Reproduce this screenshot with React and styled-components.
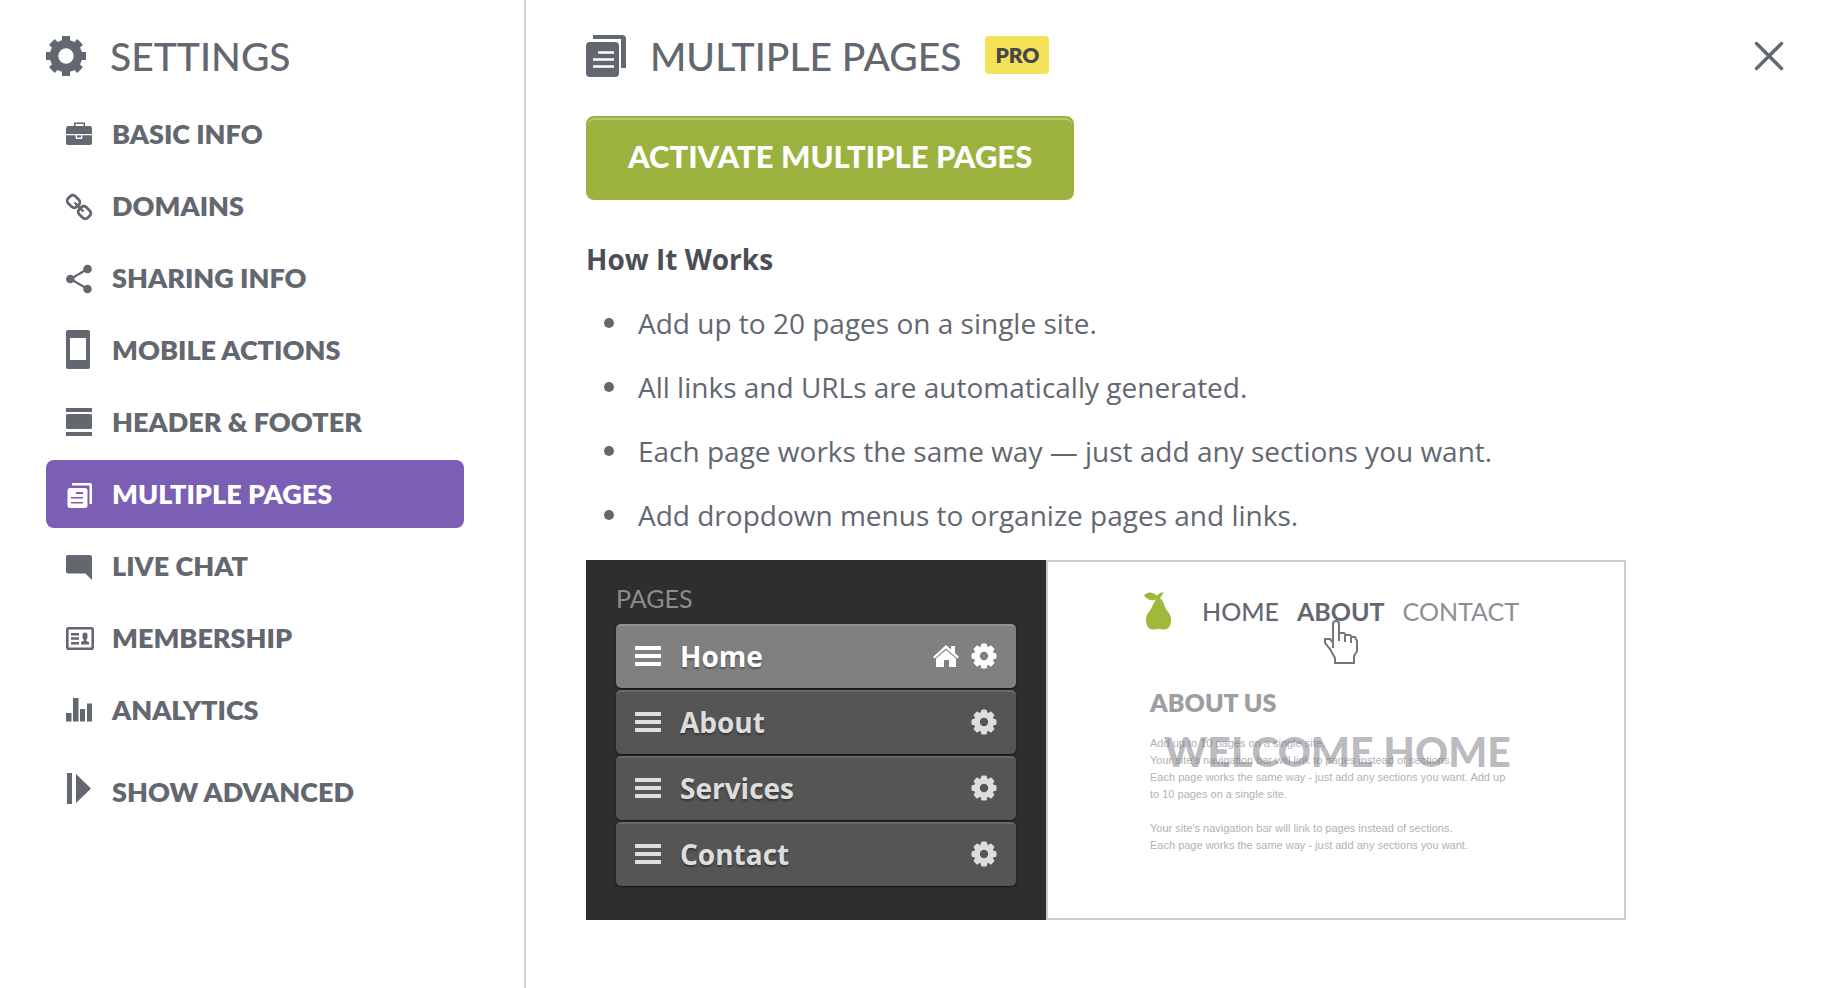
import styled, { createGlobalStyle } from 'styled-components';

const GlobalStyle = createGlobalStyle`
  * {
    box-sizing: border-box;
  }
  body {
    margin: 0;
    background: #ffffff;
    color: #636770;
    font-family: "Open Sans", "Noto Sans", sans-serif;
  }
  h1, h2, h3, h4, p, ul {
    margin: 0;
    padding: 0;
  }
`;

const Layout = styled.div`
  display: flex;
  min-height: 100vh;
`;

const Sidebar = styled.aside`
  flex: 0 0 526px;
  padding: 32px 60px 32px 46px;
  border-right: 2px solid #cdd2d6;
`;

const Main = styled.main`
  flex: 1;
  min-width: 0;
  padding: 32px 36px 32px 60px;
`;

const Header = styled.header`
  display: flex;
  align-items: center;
  height: 48px;
`;

const HeaderIcon = styled.svg`
  flex: none;
  width: 40px;
  height: 44px;
  margin-right: 24px;
`;

const Title = styled.h1`
  font-family: Lato, sans-serif;
  font-size: 39px;
  font-weight: 500;
  line-height: 48px;
`;

const Badge = styled.span`
  margin: 0 0 2px 24px;
  padding: 0 10px;
  border-radius: 4px;
  background: #f4e157;
  color: #45474b;
  font-family: Lato, sans-serif;
  font-size: 21px;
  font-weight: 800;
  line-height: 38px;
`;

const CloseButton = styled.button`
  display: flex;
  margin-left: auto;
  padding: 0;
  border: none;
  background: none;
  color: #636770;
  cursor: pointer;
`;

const NavList = styled.ul`
  display: flex;
  flex-direction: column;
  gap: 4px;
  margin-top: 20px;
  list-style: none;

  li:last-child {
    margin-top: 10px;
  }
`;

const NavLink = styled.a`
  display: flex;
  align-items: center;
  gap: 18px;
  height: 68px;
  padding: 0 20px;
  border-radius: 8px;
  background: ${({ $active }) => ($active ? '#7a5fb4' : 'transparent')};
  color: ${({ $active }) => ($active ? '#ffffff' : '#636770')};
  font-family: Lato, sans-serif;
  font-size: 27px;
  font-weight: 800;
  text-decoration: none;

  svg {
    flex: none;
    width: 28px;
    height: 40px;
  }
`;

const NavLabel = styled.span`
  padding-bottom: 2px;
`;

const ActivateButton = styled.button`
  display: block;
  height: 84px;
  margin-top: 36px;
  padding: 0 40px 4px;
  border: 2px solid #9cb23f;
  border-radius: 8px;
  background: #9cb23f;
  box-shadow: inset 0 2px 0 rgba(255, 255, 255, 0.3);
  color: #ffffff;
  font-family: Lato, sans-serif;
  font-size: 31px;
  font-weight: 900;
  cursor: pointer;
`;

const SectionTitle = styled.h2`
  margin-top: 39px;
  color: #4b4e56;
  font-size: 28px;
  font-weight: 700;
  line-height: 40px;
`;

const FeatureList = styled.ul`
  display: flex;
  flex-direction: column;
  gap: 24px;
  margin-top: 24px;
  list-style: none;
`;

const Feature = styled.li`
  display: flex;
  align-items: center;
  font-size: 28px;
  line-height: 40px;

  &::before {
    content: '';
    width: 10px;
    height: 10px;
    margin: 0 24px 0 18px;
    border-radius: 50%;
    background: #636770;
  }
`;

const Preview = styled.div`
  display: flex;
  width: 100%;
  max-width: 1040px;
  margin-top: 25px;
`;

const PagesPanel = styled.div`
  flex: 0 0 460px;
  padding: 22px 30px 34px;
  background: #2e2e2e;
`;

const PagesLabel = styled.h3`
  color: #8c8c8c;
  font-family: Lato, sans-serif;
  font-size: 25px;
  font-weight: 400;
  line-height: 32px;
`;

const PageRows = styled.ul`
  display: flex;
  flex-direction: column;
  gap: 2px;
  margin-top: 10px;
  list-style: none;
`;

const PageRow = styled.li`
  display: flex;
  align-items: center;
  height: 64px;
  padding: 0 18px 3px;
  border-top: 2px solid ${({ $current }) => ($current ? '#929292' : '#696969')};
  border-radius: 5px;
  background: ${({ $current }) => ($current ? '#808080' : '#555555')};
  box-shadow: 0 1px 2px rgba(0, 0, 0, 0.6);
  color: ${({ $current }) => ($current ? '#ffffff' : '#dddddd')};
  font-size: 28px;
  font-weight: 700;
  text-shadow: 0 2px 2px rgba(0, 0, 0, 0.35);

  svg {
    flex: none;
    width: 28px;
    height: 28px;
  }
`;

const PageName = styled.span`
  flex: 1;
  margin-left: 18px;
`;

const RowIcons = styled.span`
  display: flex;
  gap: 10px;
`;

const SitePanel = styled.div`
  flex: 1;
  min-width: 0;
  padding: 28px 20px 28px 96px;
  border: 2px solid #cccccc;
`;

const SiteNav = styled.nav`
  display: flex;
  align-items: center;
  height: 42px;

  svg {
    flex: none;
    margin-right: 30px;
  }
`;

const SiteLink = styled.a`
  position: relative;
  margin-right: 18px;
  color: ${({ $light }) => ($light ? '#8b8f95' : '#636770')};
  font-family: Lato, sans-serif;
  font-size: 25px;
  font-weight: ${({ $weight }) => $weight};
  text-decoration: none;
`;

const Cursor = styled.svg`
  position: absolute;
  top: 24px;
  left: 27px;
`;

const SiteArticle = styled.article`
  margin-top: 54px;
  padding-left: 6px;
`;

const SiteHeading = styled.h3`
  color: #9b9ea2;
  font-family: Lato, sans-serif;
  font-size: 25px;
  font-weight: 800;
  line-height: 32px;
`;

const SiteBody = styled.div`
  position: relative;
  margin-top: 17px;
  color: #b0b2b5;
  font-family: "Liberation Sans", sans-serif;
  font-size: 11px;
  line-height: 17px;

  p + p {
    margin-top: 17px;
  }
`;

const Welcome = styled.div`
  position: absolute;
  top: 0;
  left: 14px;
  color: rgba(99, 103, 112, 0.45);
  font-family: Lato, sans-serif;
  font-size: 41px;
  font-weight: 900;
  line-height: 34px;
  white-space: nowrap;
`;

const toothAngles = [0, 45, 90, 135];

function GearIcon() {
  return (
    <HeaderIcon viewBox="0 0 40 44" fill="currentColor" aria-hidden="true">
      <circle cx="20" cy="22" r="12" fill="none" stroke="currentColor" strokeWidth="8.600" />
      {toothAngles.map((angle) => (
        <g key={angle} transform={`rotate(${angle} 20 22)`}>
          <path d="M16 2h8v6h-8zM16 36h8v6h-8z" />
        </g>
      ))}
    </HeaderIcon>
  );
}

function PagesHeaderIcon() {
  return (
    <HeaderIcon viewBox="0 0 40 44" fill="currentColor" aria-hidden="true">
      <path d="M7 1h29a4 4 0 0 1 4 4v29h-5V5H7z" />
      <rect y="8" width="33" height="35" rx="4" />
      <path d="M12 18.500h16M7 25.500h21M7 32.500h21" stroke="#fff" strokeWidth="2.500" />
    </HeaderIcon>
  );
}

function SmallGear() {
  return (
    <svg viewBox="0 0 28 28" fill="currentColor" aria-hidden="true">
      <circle cx="14" cy="14" r="7.200" fill="none" stroke="currentColor" strokeWidth="6" />
      {toothAngles.map((angle) => (
        <g key={angle} transform={`rotate(${angle} 14 14)`}>
          <rect x="11" y="1.500" width="6" height="5" rx="1.500" />
          <rect x="11" y="21.500" width="6" height="5" rx="1.500" />
        </g>
      ))}
    </svg>
  );
}

function MenuBars() {
  return (
    <svg viewBox="0 0 28 28" fill="currentColor" aria-hidden="true">
      <path d="M1 4h26v4H1zM1 12h26v4H1zM1 20h26v4H1z" />
    </svg>
  );
}

function HouseIcon() {
  return (
    <svg viewBox="0 0 28 28" fill="currentColor" aria-hidden="true">
      <path d="M1 15 14 3l5 4.500V4h4v7l4 4-1.500 1.500L14 6.500 2.500 16.500z" />
      <path d="M4 16.500 14 8l10 8.500V25h-7v-7h-5v7H4z" />
    </svg>
  );
}

// 28x40 drawings, one for each entry of the sidebar
const navIcons = {
  info: (
    <>
      <path d="M8.700 13V9.300h9.600V13" fill="none" stroke="currentColor" strokeWidth="1.500" />
      <path d="M2.500 12h21a2.500 2.500 0 0 1 2.500 2.500V20H0v-5.500A2.500 2.500 0 0 1 2.500 12z" />
      <path d="M0 21.300h9.700V25h6.600v-3.700H26V29a2 2 0 0 1-2 2H2a2 2 0 0 1-2-2z" />
      <path d="M11 21.300h4v2.200h-4z" />
    </>
  ),
  domains: (
    <g fill="none" stroke="currentColor" strokeWidth="2.800">
      <rect x="1.500" y="10.500" width="12" height="10" rx="3.500" transform="rotate(45 7.500 15.500)" />
      <rect x="12.500" y="21.500" width="12" height="10" rx="3.500" transform="rotate(45 18.500 26.500)" />
      <path d="m8.500 16.500 9 9" strokeWidth="2.400" />
    </g>
  ),
  sharing: (
    <>
      <path d="M21.500 11 4.500 21l17 10" fill="none" stroke="currentColor" strokeWidth="2.200" />
      <circle cx="21.500" cy="11" r="4.300" />
      <circle cx="4.300" cy="21" r="4.300" />
      <circle cx="21.500" cy="31" r="4.300" />
    </>
  ),
  mobile: <path fillRule="evenodd" d="M2 0h20a2 2 0 0 1 2 2v35a2 2 0 0 1-2 2H2a2 2 0 0 1-2-2V2a2 2 0 0 1 2-2zM4 8v22h16V8z" />,
  header: <path d="M0 6h26v4H0zM1.500 12h23a1.500 1.500 0 0 1 1.500 1.500v12a1.500 1.500 0 0 1-1.500 1.500h-23A1.500 1.500 0 0 1 0 25.500v-12A1.500 1.500 0 0 1 1.500 12zM0 30h26v4H0z" />,
  pages: (
    <>
      <path d="M6 9h18a2 2 0 0 1 2 2v19h-2.500V11.500H6z" />
      <path fillRule="evenodd" d="M4 14h15a2.500 2.500 0 0 1 2.500 2.500v15A2.500 2.500 0 0 1 19 34H4a2.500 2.500 0 0 1-2.500-2.500v-15A2.500 2.500 0 0 1 4 14zm6 4v2h7v-2zM5 23v1.500h12V23zM5 28v1.500h12V28z" />
    </>
  ),
  chat: <path d="M2 9h22a2 2 0 0 1 2 2v23l-6.500-6.500H2a2 2 0 0 1-2-2V11a2 2 0 0 1 2-2z" />,
  membership: (
    <>
      <rect x="1.300" y="10.300" width="25.400" height="20.400" rx="1.500" fill="none" stroke="currentColor" strokeWidth="2.600" />
      <path d="M5 15h8v2.500H5zM5 19.300h8v2.500H5zM5 24h8v2.500H5zM15 26.500V24l3-1.200-1.500-3V17a2.500 2.500 0 0 1 5 0v2.800l-1.500 3 3 1.200v2.500z" />
    </>
  ),
  analytics: <path d="M0 23h5.500v8.500H0zM7 8h5.500v23.500H7zM14 19h5v12.500h-5zM21 13.500h5v18h-5z" />,
  advanced: <path d="M1 1h5v31H1zM10 2l15 14.500L10 31z" />,
};

const navItems = [
  { icon: 'info', label: 'BASIC INFO' },
  { icon: 'domains', label: 'DOMAINS' },
  { icon: 'sharing', label: 'SHARING INFO' },
  { icon: 'mobile', label: 'MOBILE ACTIONS' },
  { icon: 'header', label: 'HEADER & FOOTER' },
  { icon: 'pages', label: 'MULTIPLE PAGES', active: true },
  { icon: 'chat', label: 'LIVE CHAT' },
  { icon: 'membership', label: 'MEMBERSHIP' },
  { icon: 'analytics', label: 'ANALYTICS' },
  { icon: 'advanced', label: 'SHOW ADVANCED' },
];

const features = [
  'Add up to 20 pages on a single site.',
  'All links and URLs are automatically generated.',
  'Each page works the same way — just add any sections you want.',
  'Add dropdown menus to organize pages and links.',
];

const pages = ['Home', 'About', 'Services', 'Contact'];

export default function App() {
  return (
    <Layout>
      <GlobalStyle />
      <Sidebar>
        <Header>
          <GearIcon />
          <Title as="h2">SETTINGS</Title>
        </Header>
        <nav aria-label="Settings">
          <NavList>
            {navItems.map(({ icon, label, active }) => (
              <li key={icon}>
                <NavLink href={`#${icon}`} $active={active}>
                  <svg viewBox="0 0 28 40" fill="currentColor" aria-hidden="true">
                    {navIcons[icon]}
                  </svg>
                  <NavLabel>{label}</NavLabel>
                </NavLink>
              </li>
            ))}
          </NavList>
        </nav>
      </Sidebar>
      <Main>
        <Header>
          <PagesHeaderIcon />
          <Title>MULTIPLE PAGES</Title>
          <Badge>PRO</Badge>
          <CloseButton type="button" aria-label="Close">
            <svg width="34" height="34" viewBox="0 0 34 34" stroke="currentColor" strokeWidth="3.400" strokeLinecap="round" aria-hidden="true">
              <path d="m4.500 4.500 25 25M29.500 4.500l-25 25" />
            </svg>
          </CloseButton>
        </Header>
        <ActivateButton type="button">ACTIVATE MULTIPLE PAGES</ActivateButton>
        <SectionTitle>How It Works</SectionTitle>
        <FeatureList>
          {features.map((feature) => (
            <Feature key={feature}>{feature}</Feature>
          ))}
        </FeatureList>
        <Preview>
          <PagesPanel>
            <PagesLabel>PAGES</PagesLabel>
            <PageRows>
              {pages.map((page, index) => (
                <PageRow key={page} $current={index === 0}>
                  <MenuBars />
                  <PageName>{page}</PageName>
                  <RowIcons>
                    {index === 0 && <HouseIcon />}
                    <SmallGear />
                  </RowIcons>
                </PageRow>
              ))}
            </PageRows>
          </PagesPanel>
          <SitePanel>
            <SiteNav>
              <svg width="28" height="38" viewBox="0 0 28 38" fill="#9fb93c" aria-hidden="true">
                <path d="M0 3.500C3-.5 9-.5 12.500 3.500L17 .5h3l-4 5.500c3 2 4 7 6 11 2 3 5 5 5 11 0 5-2 9-6 9.500-3 .3-4-.5-6.500-.5s-4 .8-6.500.5C4 37 2 33 2 28c0-6 3-8 5-11 2-4 3-8 6-10C9 9.500 3 8 0 3.500z" />
              </svg>
              <SiteLink href="#home" $weight={500}>HOME</SiteLink>
              <SiteLink href="#about" $weight={700}>
                ABOUT
                <Cursor width="34" height="46" viewBox="0 0 34 46" fill="#fff" stroke="#777" strokeWidth="2" aria-hidden="true">
                  <path d="M9 28V4c0-4 6-4 6 0v9h5l2 2h4l2 2h3l2 4v10l-3 5v7H11v-5L6 29l-5-6v-4h5l3 4M15 13v8M21 15v7M27 17v6" />
                </Cursor>
              </SiteLink>
              <SiteLink href="#contact" $weight={400} $light>CONTACT</SiteLink>
            </SiteNav>
            <SiteArticle>
              <SiteHeading>ABOUT US</SiteHeading>
              <SiteBody>
                <p>
                  Add up to 10 pages on a single site.
                  <br />
                  Your site&apos;s navigation bar will link to pages instead of sections.
                  <br />
                  Each page works the same way - just add any sections you want. Add up
                  <br />
                  to 10 pages on a single site.
                </p>
                <p>
                  Your site&apos;s navigation bar will link to pages instead of sections.
                  <br />
                  Each page works the same way - just add any sections you want.
                </p>
                <Welcome>WELCOME HOME</Welcome>
              </SiteBody>
            </SiteArticle>
          </SitePanel>
        </Preview>
      </Main>
    </Layout>
  );
}
